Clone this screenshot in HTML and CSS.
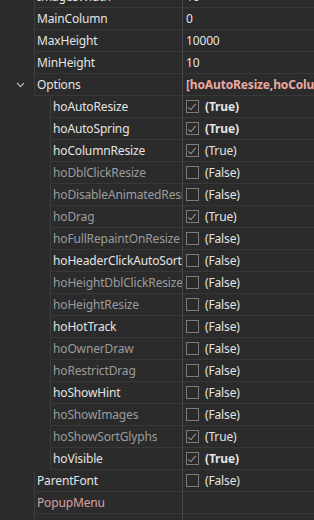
FILE: index.html
```html
<!DOCTYPE html>
<html>
<head>
<meta charset="utf-8">
<link rel="stylesheet" href="styles.css">
</head>
<body>
<div class="grid">
  <div class="row"><div class="ind"></div><div class="name">ImagesWidth</div><div class="val">16</div></div>
  <div class="row"><div class="ind"></div><div class="name">MainColumn</div><div class="val">0</div></div>
  <div class="row"><div class="ind"></div><div class="name">MaxHeight</div><div class="val">10000</div></div>
  <div class="row"><div class="ind"></div><div class="name">MinHeight</div><div class="val">10</div></div>
  <div class="row"><div class="ind"><svg class="chev" width="9" height="6" viewBox="0 0 9 6"><path d="M1 1 L4.5 4.5 L8 1" fill="none" stroke="#b0b0b0" stroke-width="1.3"/></svg></div><div class="name">Options</div><div class="val set">[hoAutoResize,hoColumnResize,hoDrag,hoShowSortGlyphs,hoVisible]</div></div>

  <div class="row sub"><div class="ind"></div><div class="name">hoAutoResize</div><div class="val"><span class="cb on"></span><span class="b">(True)</span></div></div>
  <div class="row sub"><div class="ind"></div><div class="name">hoAutoSpring</div><div class="val"><span class="cb on"></span><span class="b">(True)</span></div></div>
  <div class="row sub"><div class="ind"></div><div class="name">hoColumnResize</div><div class="val"><span class="cb on"></span><span>(True)</span></div></div>
  <div class="row sub"><div class="ind"></div><div class="name dim">hoDblClickResize</div><div class="val"><span class="cb"></span><span>(False)</span></div></div>
  <div class="row sub"><div class="ind"></div><div class="name dim">hoDisableAnimatedResize</div><div class="val"><span class="cb"></span><span>(False)</span></div></div>
  <div class="row sub"><div class="ind"></div><div class="name dim">hoDrag</div><div class="val"><span class="cb on"></span><span>(True)</span></div></div>
  <div class="row sub"><div class="ind"></div><div class="name dim">hoFullRepaintOnResize</div><div class="val"><span class="cb"></span><span>(False)</span></div></div>
  <div class="row sub"><div class="ind"></div><div class="name">hoHeaderClickAutoSort</div><div class="val"><span class="cb"></span><span>(False)</span></div></div>
  <div class="row sub"><div class="ind"></div><div class="name dim">hoHeightDblClickResize</div><div class="val"><span class="cb"></span><span>(False)</span></div></div>
  <div class="row sub"><div class="ind"></div><div class="name dim">hoHeightResize</div><div class="val"><span class="cb"></span><span>(False)</span></div></div>
  <div class="row sub"><div class="ind"></div><div class="name">hoHotTrack</div><div class="val"><span class="cb"></span><span>(False)</span></div></div>
  <div class="row sub"><div class="ind"></div><div class="name dim">hoOwnerDraw</div><div class="val"><span class="cb"></span><span>(False)</span></div></div>
  <div class="row sub"><div class="ind"></div><div class="name dim">hoRestrictDrag</div><div class="val"><span class="cb"></span><span>(False)</span></div></div>
  <div class="row sub"><div class="ind"></div><div class="name">hoShowHint</div><div class="val"><span class="cb"></span><span>(False)</span></div></div>
  <div class="row sub"><div class="ind"></div><div class="name dim">hoShowImages</div><div class="val"><span class="cb"></span><span>(False)</span></div></div>
  <div class="row sub"><div class="ind"></div><div class="name dim">hoShowSortGlyphs</div><div class="val"><span class="cb on"></span><span>(True)</span></div></div>
  <div class="row sub"><div class="ind"></div><div class="name">hoVisible</div><div class="val"><span class="cb on"></span><span class="b">(True)</span></div></div>

  <div class="row"><div class="ind"></div><div class="name">ParentFont</div><div class="val"><span class="cb"></span><span>(False)</span></div></div>
  <div class="row"><div class="ind"></div><div class="name pink">PopupMenu</div><div class="val"></div></div>
  <div class="row last"><div class="ind"></div><div class="name"></div><div class="val"></div></div>
</div>
</body>
</html>
```

FILE: styles.css
```css
html, body {
  margin: 0;
  padding: 0;
  background: #2b2b2b;
  height: 100%;
  overflow: hidden;
}
body {
  font-family: "Noto Sans", "Open Sans", sans-serif;
  font-size: 12px;
  letter-spacing: -0.15px;
  color: #e4e4e4;
}
.grid {
  margin-top: -14px;
  display: flex;
  flex-direction: column;
}
.row {
  display: flex;
  height: 22px;
}
.ind {
  width: 34px;
  flex: none;
  display: flex;
  align-items: center;
  justify-content: flex-end;
  padding-right: 9px;
  box-sizing: border-box;
}
.sub .ind { width: 50px; }
.name {
  width: 148px;
  flex: none;
  box-sizing: border-box;
  border-left: 1px solid #3d3d3d;
  border-bottom: 1px solid #383838;
  padding-left: 2px;
  display: flex;
  align-items: center;
  white-space: nowrap;
  overflow: hidden;
}
.sub .name { width: 132px; }
.val {
  flex: 1;
  min-width: 0;
  box-sizing: border-box;
  border-left: 1px solid #484848;
  border-bottom: 1px solid #383838;
  padding-left: 3px;
  display: flex;
  align-items: center;
  gap: 6px;
  white-space: nowrap;
  overflow: hidden;
}
.last { height: 12px; }
.last .name, .last .val { border-bottom: none; }
.dim { color: #9c9c9c; }
.pink { color: #d9a2a2; }
.set { color: #eaa9a3; font-weight: bold; }
.b { font-weight: bold; }
.cb {
  width: 11px;
  height: 11px;
  border: 1px solid #7c7c7c;
  background: #2a2a2a;
  flex: none;
  position: relative;
}
.cb.on::after {
  content: "";
  position: absolute;
  left: 3px;
  top: 1px;
  width: 3px;
  height: 7px;
  border-right: 1px solid #9a9a9a;
  border-bottom: 1px solid #9a9a9a;
  transform: rotate(40deg);
}
.chev { display: block; }
```
